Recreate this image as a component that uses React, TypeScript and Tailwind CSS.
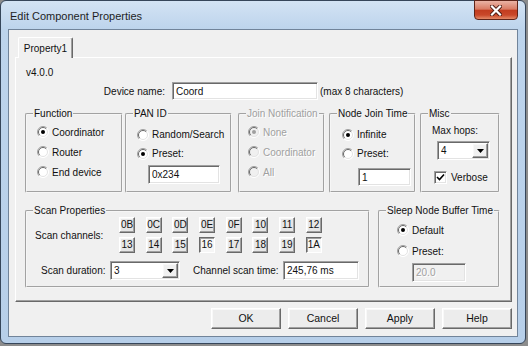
import React from "react";

const disabledText = "text-[#a0a0a0] [text-shadow:1px_1px_0_#ffffff]";
const sunken =
  "border border-t-[#a0a0a0] border-l-[#a0a0a0] border-r-white border-b-white shadow-[inset_1px_1px_0_#696969,inset_-1px_-1px_0_#e3e3e3]";
const raised =
  "border border-t-white border-l-white border-r-[#696969] border-b-[#696969] shadow-[inset_-1px_-1px_0_#a0a0a0,inset_1px_1px_0_#f8f8f8]";
const pressed =
  "border border-t-[#696969] border-l-[#696969] border-r-white border-b-white shadow-[inset_1px_1px_0_#a0a0a0]";

function Radio({ checked, disabled }: { checked?: boolean; disabled?: boolean }) {
  return (
    <svg width="12" height="12" viewBox="0 0 12 12" className="shrink-0">
      <circle cx="6" cy="6" r="5.5" fill={disabled ? "#f0f0f0" : "#ffffff"} />
      <path d="M2.1 9.9 A5.5 5.5 0 0 1 9.9 2.1" stroke="#a0a0a0" fill="none" />
      <path d="M2.8 9.2 A4.5 4.5 0 0 1 9.2 2.8" stroke="#696969" fill="none" />
      <path d="M9.9 2.1 A5.5 5.5 0 0 1 2.1 9.9" stroke="#ffffff" fill="none" />
      <path d="M9.2 2.8 A4.5 4.5 0 0 1 2.8 9.2" stroke="#e3e3e3" fill="none" />
      {checked && <circle cx="6" cy="6" r="2" fill={disabled ? "#a0a0a0" : "#000000"} />}
    </svg>
  );
}

function RadioRow({
  label,
  checked,
  disabled,
  className = "",
}: {
  label: string;
  checked?: boolean;
  disabled?: boolean;
  className?: string;
}) {
  return (
    <div className={"flex items-center whitespace-nowrap " + className}>
      <Radio checked={checked} disabled={disabled} />
      <span className={"ml-[3px] leading-[13px] " + (disabled ? disabledText : "")}>{label}</span>
    </div>
  );
}

function Group({
  title,
  disabled,
  className = "",
  children,
}: {
  title: string;
  disabled?: boolean;
  className?: string;
  children?: React.ReactNode;
}) {
  return (
    <fieldset
      className={
        "border-2 [border-style:groove] border-[#f6f6f6] rounded-[2px] min-w-0 " + className
      }
    >
      <legend
        className={
          "ml-[6px] px-[1px] leading-[13px] whitespace-nowrap " + (disabled ? disabledText : "")
        }
      >
        {title}
      </legend>
      {children}
    </fieldset>
  );
}

function Combo({ value, className = "" }: { value: string; className?: string }) {
  return (
    <div className={"flex items-stretch bg-white p-[1px] " + sunken + " " + className}>
      <div className="flex-1 pl-[2px] leading-[15px] flex items-center">{value}</div>
      <div className={"w-[16px] flex items-center justify-center bg-[#f0f0f0] " + raised}>
        <svg width="7" height="4" viewBox="0 0 7 4">
          <path d="M0 0 H7 L3.5 4 Z" fill="#000" />
        </svg>
      </div>
    </div>
  );
}

function TextBox({
  value,
  disabled,
  className = "",
}: {
  value: string;
  disabled?: boolean;
  className?: string;
}) {
  return (
    <div
      className={
        "flex items-center pl-[3px] whitespace-nowrap " +
        sunken +
        " " +
        (disabled ? "bg-[#f0f0f0] " + disabledText : "bg-white") +
        " " +
        className
      }
    >
      {value}
    </div>
  );
}

const row1 = ["0B", "0C", "0D", "0E", "0F", "10", "11", "12"];
const row2 = ["13", "14", "15", "16", "17", "18", "19", "1A"];
const pressedSet = new Set(["16", "1A"]);

function DialogButton({ label }: { label: string }) {
  return (
    <div
      className={
        "w-[70px] h-[21px] flex items-center justify-center bg-[#ececec] text-[10.5px] " + raised
      }
    >
      {label}
    </div>
  );
}

export default function App() {
  return (
    <div className="w-[528px] h-[346px] bg-[#8c8c8c] font-['Liberation_Sans',Arial,sans-serif] text-[10px] text-[#111] overflow-hidden">
      <div className="w-[526px] h-[344px] rounded-[6px] border border-[#36465a] bg-[linear-gradient(180deg,#d3e3f4_0px,#bdd4ec_28px,#b7cfe9_100%)] flex flex-col">
        {/* title bar */}
        <div className="h-[28px] flex items-start shrink-0">
          <span className="ml-[9px] mt-[8px] text-[11px] leading-[14px] text-[#1e1e1e]">
            Edit Component Properties
          </span>
          <div className="ml-auto mr-[7px] -mt-px w-[44px] h-[20px] rounded-b-[4px] border border-[#5e2419] bg-[linear-gradient(180deg,#eab3a5_0%,#d97b64_45%,#c23d20_52%,#c9482a_78%,#e48a68_100%)] flex items-center justify-center">
            <svg width="12" height="11" viewBox="0 0 12 11">
              <path d="M2 1.5 L10 9.5 M10 1.5 L2 9.5" stroke="#4a1a12" strokeWidth="4" strokeLinecap="square" />
              <path d="M2 1.5 L10 9.5 M10 1.5 L2 9.5" stroke="#ffffff" strokeWidth="2.2" strokeLinecap="square" />
            </svg>
          </div>
        </div>
        {/* client */}
        <div className="ml-[7px] w-[510px] h-[308px] border border-[#71849a] bg-[#f0f0f0] flex flex-col">
          <div className="pl-[6px] pt-[7px] flex flex-col">
            {/* tab */}
            <div className="ml-[3px] w-[55px] h-[21px] -mb-px relative z-10 bg-[#f0f0f0] border-l border-t border-white border-r border-r-[#696969] shadow-[inset_-1px_0_0_#a0a0a0] rounded-t-[2px] flex items-center justify-center">
              Property1
            </div>
            {/* panel */}
            <div className="w-[497px] h-[245px] bg-[#f0f0f0] border border-t-white border-l-white border-r-[#696969] border-b-[#696969] shadow-[inset_-1px_-1px_0_#a0a0a0] flex flex-col">
              <div className="mt-[8px] ml-[10px] h-[13px] leading-[13px]">v4.0.0</div>
              <div className="mt-[3px] flex items-center h-[18px]">
                <div className="w-[149px] text-right">Device name:</div>
                <TextBox value="Coord" className="ml-[7px] w-[146px] h-[18px]" />
                <div className="ml-[2px]">(max 8 characters)</div>
              </div>
              {/* groups row */}
              <div className="mt-[7px] flex h-[86px]">
                <Group title="Function" className="ml-[9px] w-[98px] h-[86px]">
                  <div className="mt-[2px] pl-[10px] flex flex-col">
                    <RadioRow label="Coordinator" checked className="h-[20px]" />
                    <RadioRow label="Router" className="h-[20px]" />
                    <RadioRow label="End device" className="h-[20px]" />
                  </div>
                </Group>
                <Group title="PAN ID" className="ml-[2px] w-[107px] h-[86px]">
                  <div className="mt-[5px] pl-[10px] flex flex-col">
                    <RadioRow label="Random/Search" className="h-[19px]" />
                    <RadioRow label="Preset:" checked className="h-[19px]" />
                    <TextBox value="0x234" className="mt-[2px] ml-[11px] w-[72px] h-[19px]" />
                  </div>
                </Group>
                <Group title="Join Notification" disabled className="ml-[6px] w-[87px] h-[86px]">
                  <div className="mt-[2px] pl-[8px] flex flex-col">
                    <RadioRow label="None" checked disabled className="h-[20px]" />
                    <RadioRow label="Coordinator" disabled className="h-[20px]" />
                    <RadioRow label="All" disabled className="h-[20px]" />
                  </div>
                </Group>
                <Group title="Node Join Time" className="ml-[4px] w-[87px] h-[86px]">
                  <div className="mt-[5px] pl-[11px] flex flex-col">
                    <RadioRow label="Infinite" checked className="h-[19px]" />
                    <RadioRow label="Preset:" className="h-[19px]" />
                    <TextBox value="1" className="mt-[5px] ml-[16px] w-[53px] h-[18px]" />
                  </div>
                </Group>
                <Group title="Misc" className="ml-[4px] w-[80px] h-[86px]">
                  <div className="flex flex-col">
                    <div className="mt-[4px] ml-[10px] leading-[13px]">Max hops:</div>
                    <Combo value="4" className="mt-[4px] ml-[15px] w-[53px] h-[19px]" />
                    <div className="mt-[11px] ml-[12px] h-[13px] flex items-center">
                      <div className={"w-[13px] h-[13px] bg-white flex items-center justify-center " + sunken}>
                        <svg width="9" height="9" viewBox="0 0 9 9">
                          <path d="M1 4 L3.5 6.5 L8 1.5" stroke="#000" strokeWidth="1.6" fill="none" />
                        </svg>
                      </div>
                      <span className="ml-[4px]">Verbose</span>
                    </div>
                  </div>
                </Group>
              </div>
              {/* scan row */}
              <div className="mt-[11px] flex h-[84px]">
                <Group title="Scan Properties" className="ml-[9px] w-[345px] h-[84px]">
                  <div className="flex flex-col">
                    <div className="flex items-center">
                      <div className="ml-[8px] w-[84px] whitespace-nowrap">Scan channels:</div>
                      <div className="grid grid-cols-8 gap-x-[10.7px] gap-y-[4px]">
                        {[...row1, ...row2].map((c) => (
                          <div
                            key={c}
                            className={
                              "w-[16px] h-[16px] flex items-center justify-center leading-none " +
                              (pressedSet.has(c) ? "bg-[#f6f6f6] " + pressed : "bg-[#e6e6e6] " + raised)
                            }
                          >
                            {c}
                          </div>
                        ))}
                      </div>
                    </div>
                    <div className="mt-[8px] flex items-center h-[19px] whitespace-nowrap">
                      <div className="ml-[14px] w-[69px]">Scan duration:</div>
                      <Combo value="3" className="w-[70px] h-[19px]" />
                      <div className="ml-[13px] w-[90px]">Channel scan time:</div>
                      <TextBox value="245,76 ms" className="w-[76px] h-[19px]" />
                    </div>
                  </div>
                </Group>
                <Group title="Sleep Node Buffer Time" className="ml-[8px] w-[122px] h-[84px]">
                  <div className="mt-[3px] pl-[17px] flex flex-col">
                    <RadioRow label="Default" checked className="h-[20px]" />
                    <RadioRow label="Preset:" className="mt-[1px] h-[20px]" />
                    <TextBox value="20.0" disabled className="mt-[2px] ml-[15px] w-[54px] h-[19px]" />
                  </div>
                </Group>
              </div>
            </div>
          </div>
          {/* buttons */}
          <div className="mt-[6px] pr-[5px] flex justify-end gap-[7px]">
            <DialogButton label="OK" />
            <DialogButton label="Cancel" />
            <DialogButton label="Apply" />
            <DialogButton label="Help" />
          </div>
        </div>
      </div>
    </div>
  );
}
